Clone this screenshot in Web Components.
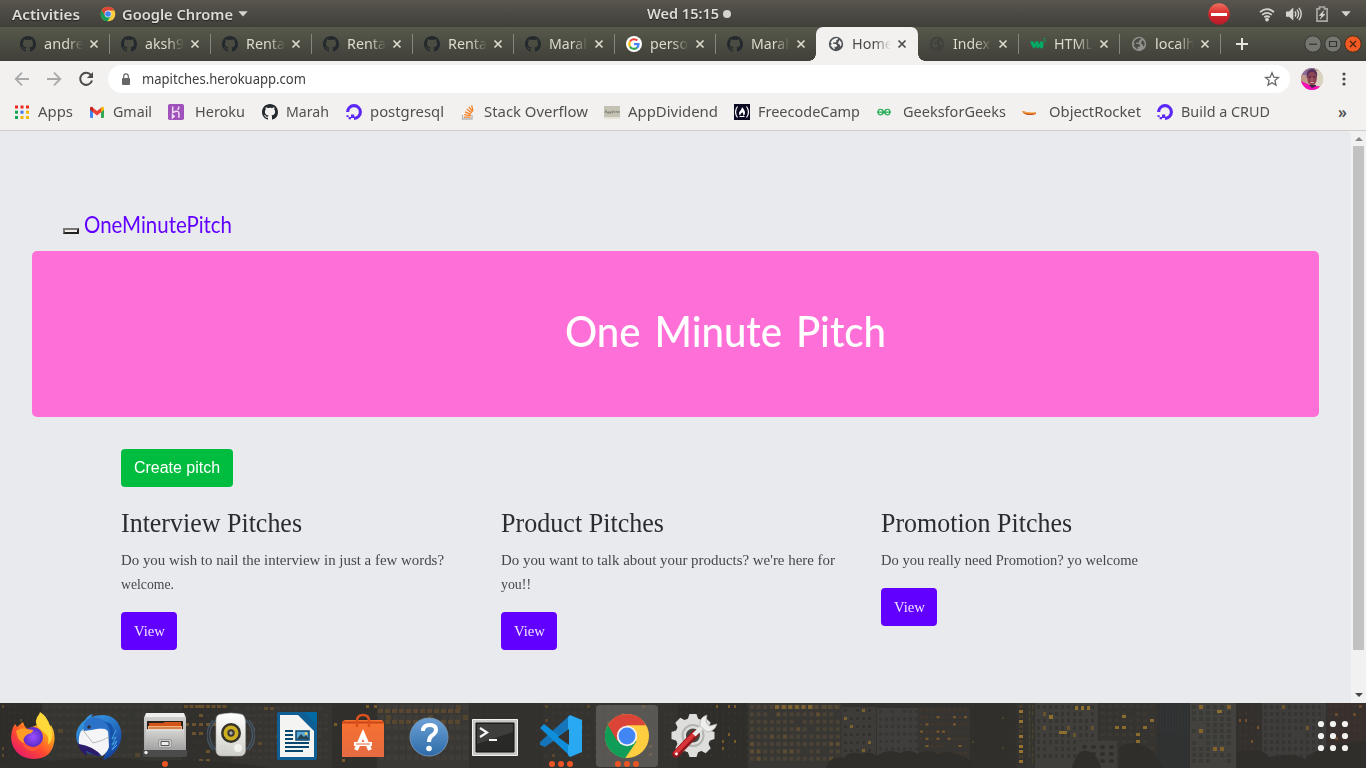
<!DOCTYPE html>
<html lang="en">
<head>
<meta charset="utf-8">
<title>Home</title>
<style>
html,body{margin:0;padding:0;width:1366px;height:768px;overflow:hidden;background:#33312e}
body{font-family:"Noto Sans","Open Sans",sans-serif}
</style>
</head>
<body>
<desktop-screen></desktop-screen>
<script>
const GH='<path d="M8 0C3.58 0 0 3.58 0 8c0 3.54 2.29 6.53 5.47 7.59.4.07.55-.17.55-.38 0-.19-.01-.82-.01-1.49-2.01.37-2.53-.49-2.69-.94-.09-.23-.48-.94-.82-1.13-.28-.15-.68-.52-.01-.53.63-.01 1.08.58 1.23.82.72 1.21 1.87.87 2.33.66.07-.52.28-.87.51-1.07-1.78-.2-3.64-.89-3.64-3.95 0-.87.31-1.59.82-2.15-.08-.2-.36-1.02.08-2.12 0 0 .67-.21 2.2.82.64-.18 1.32-.27 2-.27s1.36.09 2 .27c1.53-1.04 2.2-.82 2.2-.82.44 1.1.16 1.92.08 2.12.51.56.82 1.27.82 2.15 0 3.07-1.87 3.75-3.65 3.95.29.25.54.73.54 1.48 0 1.07-.01 1.93-.01 2.2 0 .21.15.46.55.38A8.01 8.01 0 0016 8c0-4.42-3.58-8-8-8z" fill="#24292e"/>';
const globe=(c,bg)=>`<circle cx="8" cy="8" r="7.2" fill="${c}"/><path d="M7.200 2.300 10 2 9.400 3.900 7.700 4.500 8.600 5.600 7.200 6.600 5.500 6.200 4.900 7.800 7.800 7.900 9.300 9.500 8.200 11 6.500 10.800 6.900 13.300 5.200 12.600 2.300 9 3.900 8.300 2.700 6.200Q4 3.200 7.200 2.300ZM11.500 4.100 13.400 6.500 13.600 9 12 10.700 12 8.700 10.100 7.600 10.400 5.900Z" fill="${bg}"/>`;
const CHROME='<circle cx="24" cy="24" r="22" fill="#ffcd40"/><path d="M24 24 4.900 13A22 22 0 0 0 22.300 46L33.500 29.500Z" fill="#0f9d58"/><path d="M4.900 13A22 22 0 0 1 43.200 13.300L24 13.300 14.500 29.400Z" fill="#db4437"/><circle cx="24" cy="24" r="10.200" fill="#f1f1f1"/><circle cx="24" cy="24" r="8.400" fill="#4285f4"/>';
const DO='<path d="M8 14.400A6.400 6.400 0 1 0 1.600 8" fill="none" stroke="#5b27f5" stroke-width="3.100"/><path d="M5 10.600h3.200v3.300H5ZM2.600 13h2.400v2.300H2.600ZM.5 11.200h2.100V13H.5Z" fill="#5b27f5"/>';
const ICONS={
github:[16,GH],
globe:[16,globe('#505154','#f2f1f0')],globeDark:[16,globe('#3f403b','#4b4b43')],globeGrey:[16,globe('#8f908c','#4b4b43')],
google:[16,'<circle cx="8" cy="8" r="8" fill="#fff"/><g fill="none" stroke-width="2.1"><path d="M11.3 4.5A4.7 4.7 0 0 0 4 5.6" stroke="#ea4335"/><path d="M4 5.5a4.7 4.7 0 0 0 0 5" stroke="#fbbc05"/><path d="M3.9 10.4a4.7 4.7 0 0 0 7.3 1.2" stroke="#34a853"/><path d="M8 8.1h4.6q0 2.3-1.6 3.6" stroke="#4285f4"/></g>'],
w3:[16,'<path d="M.4 5.200h3l1.300 3 .8-3h2.600l1.200 3 1.100-3h1.800c1.800 1 2 7.400-.5 7.400-1.200 0-1.800-.9-2-2-.5 1.200-1.300 2-2.300 2L6 9.800 5 12.600C2.500 12 1 8.500.4 5.200Z" fill="#05a967"/><path d="M13.300 2.600h1.900l-1 1.200q1.300.2 1 1.500t-1.900.8" fill="none" stroke="#05a967" stroke-width=".8"/>'],
chrome:[48,CHROME],
caret:[10,'<path d="M.3 2.300h9.400L5 7.400Z" fill="#d5d3ce"/>'],
noentry:[22,'<defs><linearGradient id="r" x2="0" y2="1"><stop stop-color="#f0705e"/><stop offset=".5" stop-color="#d5282b"/><stop offset="1" stop-color="#b51c2c"/></linearGradient></defs><circle cx="11" cy="11" r="10.700" fill="url(#r)"/><path d="M3 10h16v3H3Z" fill="#fff"/>'],
wifi:[16,'<g fill="none" stroke="#d5d3ce" stroke-width="1.800"><path d="M1 6.200q7-6.200 14 0M3.200 8.900q4.800-4 9.600 0M5.300 11.300q2.700-2.100 5.400 0"/></g><circle cx="8" cy="13.600" r="1.900" fill="#d5d3ce"/>'],
sound:[16,'<path d="M0 5.500h3L7.300 1.500v13L3 10.800H0Z" fill="#d5d3ce"/><g fill="none" stroke="#d5d3ce" stroke-width="1.400"><path d="M9 5.500q1.600 2.500 0 5M11 3.600q3.200 4.400 0 8.800M13 1.900q4.500 6 0 12.200"/></g>'],
battery:[16,'<path d="M3 2.800h2.500V1h5v1.800H13.100V15.200H3Z" fill="none" stroke="#aaa8a2" stroke-width="1.700"/><path d="M9.700 4.800 5.200 9.500H8L6.200 13 11 8.300H8.300Z" fill="#e0deda" stroke="#e0deda" stroke-width=".5"/>'],
close:[10,'<path d="m1.500 1.500 7 7m0-7-7 7" stroke="currentColor" stroke-width="1.700"/>'],
plus:[12,'<path d="M6 0v12M0 6h12" stroke="#e6e5de" stroke-width="2"/>'],
back:[16,'<path d="M15 8H2M8 1.700 1.700 8 8 14.300" fill="none" stroke="#a9a9a9" stroke-width="1.800"/>'],
fwd:[16,'<path d="M1 8h13M8 1.700 14.300 8 8 14.300" fill="none" stroke="#a9a9a9" stroke-width="1.800"/>'],
reload:[16,'<path d="M13 4.200A6 6 0 1 0 14 9.500" fill="none" stroke="#4b4b4b" stroke-width="2"/><path d="M15 1v6.100H8.900Z" fill="#4b4b4b"/>'],
lock:[12,'<rect x="2" y="5" width="8" height="7" rx="1" fill="#666"/><path d="M3.700 5V3.200a2.300 2.300 0 0 1 4.600 0V5" fill="none" stroke="#666" stroke-width="1.200"/>'],
star:[16,'<path d="m8 1.800 1.800 4.300 4.700.4-3.600 3 1.100 4.600L8 11.700l-4 2.400 1.100-4.600-3.600-3 4.700-.4Z" fill="none" stroke="#6a6a6a" stroke-width="1.300"/>'],
kebab:[16,'<g fill="#4a4a4a"><circle cx="8" cy="3" r="1.600"/><circle cx="8" cy="8" r="1.600"/><circle cx="8" cy="13" r="1.600"/></g>'],
avatar:[22,'<clipPath id="c"><circle cx="11" cy="11" r="11"/></clipPath><g clip-path="url(#c)"><path fill="#c4a78f" d="M0 0h22v22H0z"/><path fill="#d9d3bf" d="M14 3h8v15h-8z"/><path fill="#8d6d96" d="M0 0h14v4L7 6l-3 8H0Z"/><path fill="#bf9a86" d="M0 7h5v8H0Z"/><ellipse cx="11" cy="6.500" rx="5.200" ry="5.500" fill="#56305c"/><ellipse cx="11" cy="10.500" rx="4.800" ry="6.800" fill="#8d4555"/><path d="M7.500 9h2.500M12 9h2.500" stroke="#3a2038" stroke-width="1.200"/><path d="M11 10v3" stroke="#b97672"/><path d="M9.300 14.500h3.600" stroke="#dba7a6"/><path fill="#3f2540" d="M8 17h7v3H8Z"/><path fill="#f50fb8" d="M0 13q4 2 7 3l4 4 4-2 7 1v4H0Z"/></g>'],
apps:[16,'<path fill="#ea2a1f" d="M1 1.500h3v3H1zM6.500 1.500h3v3h-3z"/><path fill="#ea2a1f" d="M12 1.500h3v3h-3z"/><path fill="#14a352" d="M1 6.700h3v3H1z"/><path fill="#4374ec" d="M6.500 6.700h3v3h-3z"/><path fill="#f3b70b" d="M12 6.700h3v3h-3zM6.500 12h3v3h-3zM12 12h3v3h-3z"/><path fill="#14a352" d="M1 12h3v3H1z"/>'],
gmail:[16,'<path fill="#4285f4" d="M1 4.500h3V14H2q-1 0-1-1Z"/><path fill="#34a853" d="M12 4.500h3V13q0 1-1 1h-2Z"/><path fill="#ea4335" d="m3 3 5 4 5-4v4.500L8 11.500 3 7.500Z"/><path fill="#c5221f" d="M1 4q.6-2 2.700-1L4 8 1 5.800Z"/><path fill="#fbbc04" d="M15 4q-.6-2-2.700-1L12 8l3-2.200Z"/>'],
heroku:[16,'<rect width="16" height="16" rx="1.800" fill="#a052ba"/><path d="M4.700 2.500v6Q10.900 6 10.900 9v4.800M10.900 2.500q0 2-1.300 3.200M4.500 10.800v3l1.700-1.500Z" fill="none" stroke="#f0def6" stroke-width="1.500"/>'],
ocean:[16,DO],
so:[16,'<path d="M2.500 11V15h9.500v-4" fill="none" stroke="#b4b4b4" stroke-width="1.300"/><g stroke="#f48024" stroke-width="1.300"><path d="M4 13.200h6.500M4.200 10.600l6.500 1M5 7.800l6 2.500M6.700 5l5 4M9 2.800l3.500 5M11.700 1.300l1.200 5.800"/></g>'],
appd:[16,'<path fill="#c4c2b2" d="M0 2h16v12H0z"/><path fill="#e5e3d7" d="M0 13h16v2H0z"/><path d="M1 9l1-2.500L3 9M4 7.500v2.500m0-2.500q1.500.5 0 1.500M6 7.500v2.500m0-2.500q1.500.5 0 1.500M8 6.500V9q2-.5 1.500-2M11 7v2M12.500 7l.8 2 .8-2M15 7v2" fill="none" stroke="#77766c" stroke-width=".8"/>'],
fcc:[16,'<path fill="#0c0a23" d="M0 0h16v16H0z"/><path d="M3.500 2.500q-4 5.500 0 11M12.500 2.500q4 5.500 0 11" fill="none" stroke="#fff" stroke-width="1.200"/><path d="M8 3q3.200 3.500 3 6 0 2-2 2.700 1-2-.9-3.700-.1 1-1.500 2-.7 1 .2 1.700Q4.700 11 5 9q.2-1.300 1.500-2.500Q7.800 5.200 8 3ZM5.500 12h5v1h-5Z" fill="#fff"/>'],
gfg:[16,'<path d="M1 8.200h14M7 6Q3 4 2 7.500q.2 4.500 4 3 1.300-.7 1.300-2.300M9 6q4-2 5 1.500-.2 4.500-4 3-1.300-.7-1.300-2.300M5.700 5.500l4.600 5M10.300 5.500l-4.600 5" fill="none" stroke="#25ad58" stroke-width="1.200"/>'],
rocket:[16,'<path fill="#e66e22" d="M.8 6.800Q8 9.500 15.300 8.200l-.8 2Q8 12 2.500 9.600Z"/><path fill="#b33817" d="M3 9.600Q8 11 14.500 9.800 9 12.500 3 9.600Z"/><path d="M1.500 7.500q5 2 12 1.200" fill="none" stroke="#f7c56a" stroke-width=".7"/>'],
firefox:[48,'<defs><linearGradient id="f" x1=".9" y1="0" x2=".2" y2="1"><stop stop-color="#fff44f"/><stop offset=".35" stop-color="#ffa41c"/><stop offset=".65" stop-color="#ff4b2f"/><stop offset="1" stop-color="#e6156f"/></linearGradient><radialGradient id="p"><stop stop-color="#9b4dff"/><stop offset="1" stop-color="#5a2cc7"/></radialGradient></defs><path d="M6 12q1 1 2 3l6-5q1 4 4 7l10-4 3-13q8 5 10 15l1-2q5 9 3 18Q42 47 24 47 7 46 2.500 30 1 19 6 12Z" fill="url(#f)"/><path fill="#ffd83a" d="M31 1q-7 8-2 14l9 8q2 3 1 10 5-5 4-12-2-13-12-20Z"/><circle cx="24" cy="25" r="10" fill="url(#p)"/><path d="M7 19q5-4 11-2l6 1q0 3-5 4-7 4-3 10-7-3-8-9Z" fill="#ff9c26"/><path d="M14 30q8 9 18 3-3 6-9 6-8-1-9-9Z" fill="#ff5a34"/>'],
thunder:[48,'<defs><linearGradient id="t" x1=".2" x2=".8" y2="1"><stop stop-color="#39a0e8"/><stop offset="1" stop-color="#123b9a"/></linearGradient></defs><path d="M10 8Q13 3 18 2L16 5Q38-2 45 15q4 11-3 22-6 9-14 11l3-7-4 3Q1 42 1 23q1-9 9-15Z" fill="url(#t)"/><path fill="#2b1b6a" d="M3 31q0 7 9 13l-1-5 11 5 6-2-6-5Z"/><path fill="#f5f5f7" d="M6 19q-3 6-2 13 14 2 23 12 5-3 7-9l-1-18-21-1Z"/><path d="m7 17 11 14q9-2 16-6" fill="none" stroke="#aaa" stroke-width=".8"/><path fill="#2b72c8" d="M9 12Q11 6 19 5q10 1 17 11l-2 5q-3-5-8-5-8 2-17 3Z"/><path d="M26 8q11 4 9 21 1 9-6 15l3-1q9-7 8-22l-4-9Z" fill="#1753a9"/><circle cx="14" cy="15" r="1.700" fill="#302c30"/><path d="m41 18-4 9 4-2-4 8 5-4-5 9 5-5" fill="none" stroke="#45a4e5"/>'],
files:[48,'<defs><linearGradient id="s" x2="0" y2="1"><stop stop-color="#d5d5d4"/><stop offset="1" stop-color="#a0a0a0"/></linearGradient></defs><path d="M5 2.500h38l2 4v33H3v-33Z" fill="url(#s)"/><path fill="#efefee" d="M5 2h38l1 4H4Z"/><path fill="#28211e" d="M6 10h36v10H6Z"/><path fill="#d35418" d="M8 12h14l2-1h16v8H8Z"/><path fill="#f4b27b" d="M7 15h34v4H7Z"/><path d="M8 17h32" stroke="#b84e20"/><path d="M5 18.500h38l2 21H3Z" fill="url(#s)"/><path d="M5 19h38" stroke="#e8e8e8"/><rect x="17.500" y="28.500" width="13" height="8" rx="1.500" fill="#ccc" stroke="#999"/><path fill="#eee" stroke="#555" d="M20 30.500h8v4h-8Z"/><path fill="#4b4b4b" d="M2 39h44v5q0 2-2 2H4q-2 0-2-2Z"/><circle cx="5" cy="41.500" r="1.700" fill="#eee"/>'],
rhythm:[48,'<g fill="none" stroke="#4f6b86" opacity=".6" stroke-width="1.500"><path d="M9 9q-13 15 0 30M6 9q-12 15 0 30M39 9q13 15 0 30M42 9q12 15 0 30"/></g><defs><linearGradient id="q" x2="0" y2="1"><stop stop-color="#fff"/><stop offset="1" stop-color="#cecec9"/></linearGradient></defs><path d="M15 3q9-2 18 0 5 0 5.500 8V39q0 6-6 6H15q-6 0-6-6V9q0-6 6-6Z" fill="url(#q)" stroke="#aaa" stroke-width=".6"/><circle cx="24" cy="22" r="10" fill="#34322a"/><circle cx="24" cy="22" r="7.500" fill="#cdb022"/><circle cx="24" cy="22" r="3.700" fill="#3b3834"/><circle cx="24" cy="22" r="1.700" fill="#aaa"/><circle cx="31" cy="37" r="4" fill="#f1f1ee"/><rect x="14" y="35" width="4" height="5" fill="none" stroke="#d2d2d0"/>'],
writer:[48,'<path fill="#0f5f95" d="M6 0h26l12 12v34q0 2-2 2H6q-2 0-2-2V2q0-2 2-2Z"/><path fill="#0369a3" d="M31 0h13v13Z"/><path fill="#f4f4f2" d="M7 3h18l16 16v26H7Z"/><path d="M12 19h8M12 23h8M12 27h8M12 31h24M12 35h24M12 39h18" stroke="#07466e" stroke-width="2"/><path fill="#5ba7d6" stroke="#07466e" stroke-width="1.500" d="M23 19h13v9H23Z"/><path fill="#26424c" d="m24 27 4-5 3 3 2-2 3 4Z"/><circle cx="33" cy="21.500" r="1.300" fill="#ffd84a"/>'],
soft:[48,'<defs><linearGradient id="o" x2="0" y2="1"><stop stop-color="#f8712e"/><stop offset="1" stop-color="#e56b43"/></linearGradient></defs><path d="M4 9 6 8h37l2 3v34H3V11Z" fill="url(#o)"/><path d="M3 10.500h42" stroke="#c64618" stroke-width="2"/><path d="M18 15V9q0-6 6-6t6 6v6" fill="none" stroke="#d9501d" stroke-width="2.500"/><path d="m17 38 7-16 7 16M15 32h18" fill="none" stroke="#fff" stroke-width="4"/><path d="M17 32h14" stroke="#e66b35" stroke-width="1"/>'],
help:[48,'<defs><linearGradient id="b" x2="0" y2="1"><stop stop-color="#6da1d6"/><stop offset="1" stop-color="#2d6ba8"/></linearGradient></defs><circle cx="24" cy="25" r="19" fill="url(#b)" stroke="#7295b6"/><path d="M18 19q0-6 7-6 6 0 6 5 0 3-4 5.500-3 2-3 6.500" fill="none" stroke="#fff" stroke-width="4"/><circle cx="24" cy="36.500" r="2.800" fill="#fff"/>'],
term:[48,'<path fill="#c9c9c7" stroke="#f1f1f1" d="M1.500 7.500h45v36h-45Z"/><path fill="#292a28" stroke="#111" d="M5 11h38v29H5Z"/><path fill="#fff" opacity=".1" d="M6 12h36v8L6 32Z"/><path d="m9 16 7 4.500-7 4.500M18 28h8" fill="none" stroke="#f5f5f5" stroke-width="2.200"/>'],
code:[48,'<path fill="#1674b8" d="m3 30 29-26 3 12L8 35 3 33Z"/><path fill="#0e8edb" d="m3 16 4-4 29 23-3 9Z"/><path fill="#2aa9f3" d="M33 3 45 8V40L33 45Q31 44 31 42V5Z"/><path fill="#35322f" d="m32 17-11 8 11 8Z"/>'],
settings:[48,'<g fill="#dededc"><circle cx="22" cy="23.500" r="17.500"/><g id="g"><path d="M18.500 2h7l2 6h-11Zm-2 37h11l-2 6h-7Z"/></g><use href="#g" transform="rotate(45 22 23.500)"/><use href="#g" transform="rotate(90 22 23.500)"/><use href="#g" transform="rotate(135 22 23.500)"/></g><circle cx="22" cy="23.500" r="10.500" fill="none" stroke="#b4b4b1" stroke-width="2"/><circle cx="22" cy="23.500" r="7" fill="#464440"/><path d="m5 42 19-20" stroke="#8e171b" stroke-width="7.500" stroke-linecap="round"/><path d="m4.500 41 18.500-19" stroke="#db343b" stroke-width="4" stroke-linecap="round"/><path d="m23 23 10-10" stroke="#e9e9e7" stroke-width="4.500"/><path d="M29 14q-1-9 7-11l-1 7 3 4 8-2q-3 8-10 8Z" fill="#eeeeec" stroke="#aaa" stroke-width=".7"/><circle cx="5.500" cy="42" r="1.400" fill="#fff"/>'],
grid:[48,'<g fill="#f2f2f0">'+[12,24,36].map(x=>[12,24,36].map(y=>`<circle cx="${x}" cy="${y}" r="3.100"/>`).join('')).join('')+'</g>'],
min:[18,'<circle cx="9" cy="9" r="8.200" fill="#777771" stroke="#3a3a35"/><path d="M5 9.200h8" stroke="#32322f" stroke-width="1.200"/>'],
max:[18,'<circle cx="9" cy="9" r="8.200" fill="#777771" stroke="#3a3a35"/><path d="M5.500 6.500h7v5h-7Z" fill="none" stroke="#32322f" stroke-width="1.200"/>'],
shut:[18,'<circle cx="9" cy="9" r="8.200" fill="#f15a22" stroke="#46311f"/><path d="m6 6 6 6m0-6-6 6" stroke="#4a2212" stroke-width="1.300"/>']
};
class Base extends HTMLElement{
  render(html){if(!this.shadowRoot)this.attachShadow({mode:'open'});this.shadowRoot.innerHTML=html;}
}
customElements.define('ui-icon',class extends Base{
  connectedCallback(){const [v,body]=ICONS[this.getAttribute('name')];const s=this.getAttribute('size')||16;
    this.render(`<style>:host{display:block;flex:none;width:${s}px;height:${s}px}svg{display:block}</style><svg width="${s}" height="${s}" viewBox="0 0 ${v} ${v}">${body}</svg>`);}
});
/* A single line of text set to an exact measure. */
customElements.define('fit-text',class extends Base{
  connectedCallback(){const w=+this.getAttribute('w');
    this.render(`<style>:host{display:block;flex:none;width:${w}px;white-space:nowrap}span{display:inline-block;transform-origin:0 50%}</style><span><slot></slot></span>`);
    const s=this.shadowRoot.querySelector('span');const n=s.getBoundingClientRect().width;if(n)s.style.transform=`scaleX(${w/n})`;}
});
customElements.define('top-bar',class extends Base{
  connectedCallback(){this.render(`<style>
  :host{display:grid;grid-template-columns:647px 1fr 158px;height:27px;background:linear-gradient(#58554e,#403f3a);color:#dfdcd6;font-weight:600;font-size:14.2px;line-height:27px;text-shadow:0 1px 1px #222}
  div{display:flex;align-items:center}.l{padding-left:12px}.l ui-icon:first-of-type{margin:0 6px 0 20px}.l ui-icon:last-of-type{margin-left:5px}
  .clock{padding-bottom:1px}
  i{width:8px;height:8px;border-radius:50%;background:#d5d3ce;margin-left:4px}.r ui-icon+ui-icon{margin-left:12px}.r ui-icon:first-child{margin-top:-1px}</style>
  <div class="l"><fit-text w="68">Activities</fit-text><ui-icon name="chrome" size="16"></ui-icon><fit-text w="111">Google Chrome</fit-text><ui-icon name="caret" size="10"></ui-icon></div>
  <div class="clock"><fit-text w="72">Wed 15:15</fit-text><i></i></div>
  <div class="r"><ui-icon name="noentry" size="22"></ui-icon><ui-icon name="wifi" style="margin-left:29px"></ui-icon><ui-icon name="sound" style="margin-left:11px"></ui-icon><ui-icon name="battery"></ui-icon><ui-icon name="caret" size="10" style="margin-left:11px"></ui-icon></div>`);}
});
customElements.define('browser-tab',class extends Base{
  connectedCallback(){const on=this.hasAttribute('active'),sep=this.hasAttribute('sep');this.render(`<style>
  :host{display:flex;align-items:center;flex:none;box-sizing:border-box;width:101px;height:34px;padding-left:11px;color:${on?'#4c4c4c':'#dcdbd0'};font-size:14.2px;line-height:33px;position:relative;
  ${on?'width:102px;margin-left:-1px;padding-left:12px;background:#f2f1f0;border-radius:7px 7px 0 0;':''}}
  .t{width:39px;height:34px;margin-left:8px;overflow:hidden;-webkit-mask:linear-gradient(90deg,#000 58%,transparent);mask:linear-gradient(90deg,#000 58%,transparent)}
  .x{margin-left:6px}
  ${sep?':host::after{content:"";position:absolute;right:0;top:7px;width:1px;height:20px;background:#85867c}':''}
  ${on?':host::before,:host::after{content:"";position:absolute;bottom:0;width:7px;height:7px}:host::before{left:-7px;background:radial-gradient(circle at 0 0,transparent 6.500px,#f2f1f0 7px)}:host::after{right:-7px;background:radial-gradient(circle at 100% 0,transparent 6.500px,#f2f1f0 7px)}':''}
  </style><ui-icon name="${this.getAttribute('icon')}"></ui-icon><div class="t"><fit-text w="${this.getAttribute('w')}"><slot></slot></fit-text></div><ui-icon class="x" name="close" size="10"></ui-icon>`);}
});
customElements.define('tab-strip',class extends Base{
  connectedCallback(){const T=[['github','andre',40],['github','aksh9',39],['github','Renta',39],['github','Renta',39],['github','Renta',39],['github','Marah',43],['google','perso',38],['github','Marah',43],['globe','Home',41],['globeDark','Index',37],['w3','HTML',39],['globeGrey','localh',40]];
  this.render(`<style>:host{display:flex;align-items:center;height:34px;padding-left:9px;background:linear-gradient(#57594a,#403f3a)}
  .plus{margin-left:15px}.w{display:flex;margin-left:auto;padding-right:4px;gap:2px}</style>`+
  T.map((t,k)=>`<browser-tab icon="${t[0]}" w="${t[2]}" ${k==8?'active':''} ${k!=7&&k!=8?'sep':''}>${t[1]}</browser-tab>`).join('')+
  `<ui-icon class="plus" name="plus" size="12"></ui-icon><div class="w"><ui-icon name="min" size="18"></ui-icon><ui-icon name="max" size="18"></ui-icon><ui-icon name="shut" size="18"></ui-icon></div>`);}
});
customElements.define('address-bar',class extends Base{
  connectedCallback(){this.render(`<style>:host{display:flex;align-items:center;height:36px;background:#f2f1f0;color:#3e3e3e;font-size:14px;line-height:28px;padding-left:14px}
  .pill{display:flex;align-items:center;box-sizing:border-box;width:1182px;height:28px;border-radius:14px;background:#fff;margin-left:14px;padding:0 10px 0 12px}
  .pill fit-text{margin-left:10px}.pill ui-icon:last-child{margin-left:auto}</style>
  <ui-icon name="back"></ui-icon><ui-icon name="fwd" style="margin-left:16px"></ui-icon><ui-icon name="reload" style="margin-left:16px"></ui-icon>
  <div class="pill"><ui-icon name="lock" size="12"></ui-icon><fit-text w="164">mapitches.herokuapp.com</fit-text><ui-icon name="star" size="16"></ui-icon></div>
  <ui-icon name="avatar" size="22" style="margin-left:11px"></ui-icon><ui-icon name="kebab" style="margin-left:13px"></ui-icon>`);}
});
customElements.define('bookmark-bar',class extends Base{
  connectedCallback(){const B=[['apps',14,'Apps',38,35],['gmail',89,'Gmail',113,39],['heroku',168,'Heroku',195,50],['github',262,'Marah',286,43],['ocean',346,'postgresql',370,74],['so',460,'Stack Overflow',484,104],['appd',604,'AppDividend',628,90],['fcc',734,'FreecodeCamp',758,102],['gfg',876,'GeeksforGeeks',903,103],['rocket',1021,'ObjectRocket',1049,92],['ocean',1157,'Build a CRUD',1181,89]];
  let x=0,h='';for(const [i,ix,l,tx,w] of B){h+=`<div style="margin-left:${ix-x}px;gap:${tx-ix-16}px"><ui-icon name="${i}"></ui-icon><fit-text w="${w}">${l}</fit-text></div>`;x=tx+w;}
  this.render(`<style>:host{display:flex;align-items:center;box-sizing:border-box;height:34px;padding-bottom:4px;background:#f2f1f0;border-bottom:1px solid #cfcecd;color:#505050;font-size:14.200px;line-height:28px}div{display:flex;align-items:center}.m{margin-left:68px;font-size:15.500px;font-weight:600}</style>${h}<span class="m">»</span>`);}
});
customElements.define('pitch-card',class extends Base{
  connectedCallback(){const L=JSON.parse(this.getAttribute('lines'));this.render(`<style>:host{display:block;width:380px;font-family:"Liberation Serif",serif;color:#292d32}
  .h{font-size:27px;line-height:34px;margin-bottom:8px}.p{font-size:15px;line-height:24px;color:#44474c}
  button{display:flex;align-items:center;justify-content:center;width:56px;height:38px;margin:16px 0 0;padding:0;border:0;border-radius:4px;background:#6200ff;color:#efe6ff;font:15px/24px "Liberation Serif",serif}</style>
  <fit-text class="h" w="${this.getAttribute('w')}"><slot></slot></fit-text>${L.map(l=>`<fit-text class="p" w="${l[1]}">${l[0]}</fit-text>`).join('')}<button><fit-text w="31">View</fit-text></button>`);}
});
customElements.define('pitch-page',class extends Base{
  connectedCallback(){this.render(`<style>:host{display:grid;grid-template-columns:1351px 15px;height:572px;background:#f1f1f1}
  main{background:#e9eaee;border-top-right-radius:5px;padding:76px 0 0;box-sizing:border-box;height:572px;overflow:hidden}
  nav{display:flex;align-items:flex-start;height:44px;padding-left:63px;color:#6200ff;font:400 24px/34px Lato,sans-serif}
  .tg{box-sizing:border-box;width:16px;height:6px;border:2px solid;border-color:#777 #222 #222 #777;background:#f1efe9;margin:21px 5px 0 0}
  .hero{display:flex;align-items:center;box-sizing:border-box;width:1287px;height:166px;margin-left:32px;padding:0 0 6px 533px;background:#ff6fd8;border-radius:5px;color:#fff;font:500 43px/50px Lato,sans-serif;word-spacing:4px}
  .c{display:flex;align-items:center;justify-content:center;width:112px;height:38px;margin:32px 0 0 121px;padding:0;border:0;border-radius:4px;background:#00bd3f;color:#fff;font:16px/24px "Liberation Sans",sans-serif}
  .cards{display:flex;padding:19px 0 0 121px}
  .sb{display:flex;flex-direction:column;align-items:center}.sb b{width:11px;height:504px;background:#c1c1c1}
  .u,.d{width:0;height:0;border:4px solid transparent}.u{border-bottom-color:#888;border-top:0;margin:6px 0 5px}.d{border-top-color:#444;border-bottom:0;margin-top:43px}</style>
  <main><nav><div class="tg"></div><fit-text w="148">OneMinutePitch</fit-text></nav>
  <div class="hero"><fit-text w="321">One Minute Pitch</fit-text></div>
  <button class="c"><fit-text w="86">Create pitch</fit-text></button>
  <div class="cards">
  <pitch-card w="181" lines='[["Do you wish to nail the interview in just a few words?",323],["welcome.",53]]'>Interview Pitches</pitch-card>
  <pitch-card w="163" lines='[["Do you want to talk about your products? we&#39;re here for",334],["you!!",30]]'>Product Pitches</pitch-card>
  <pitch-card w="191" lines='[["Do you really need Promotion? yo welcome",257]]'>Promotion Pitches</pitch-card></div></main>
  <div class="sb"><div class="u"></div><b></b><div class="d"></div></div>`);}
});
/* Night skyline behind the dock: towers filled with a grid of windows. */
customElements.define('city-skyline',class extends Base{
  connectedCallback(){let s=7;const R=()=>(s=(s*16807)%2147483647)/2147483647;
  const B=[[0,0,42,65,'#2f2c2a','#34302c','#65512f',6,7,2,3,.1],[42,0,140,65,'#373632','#3f3c38','#5f4b30',7,8,5,4,.03],[183,0,48,65,'#31302d','#37342f','#7a5c2c',7,9,4,3,.2],[232,2,100,63,'#383734','#403d39','#6b522c',6,7,4,3,.04],[332,0,45,65,'#302f2c','#35312d','#8b642c',8,9,3,3,.12],[377,0,92,65,'#3b3a36','#44413c','#5c4a2f',7,10,5,5,.05],[470,0,72,65,'#33312e','#373430','#66492b',7,8,3,3,.06],[543,0,60,65,'#373431','#3d3935','#66492b',7,7,3,3,.05],[605,0,72,65,'#363431','#3b3834','#6a502b',7,8,3,3,.06],[678,0,70,65,'#302e2b','#35322e','#89662b',6,7,2,3,.09],
  [748,0,94,65,'#3b3935','#514739','#6a5432',6.600,7.400,4,4,.1],[842,4,34,61,'#403f3b','#34322f','#8d7030',6,8,3,3,.07],[877,5,41,60,'#434240','#383633','#67625b',6,7.500,3,3,.03],[918,4,52,61,'#383633','#493a2c','#94652a',5.500,7.200,3,2,.22],[970,0,45,65,'#302f2c','#33322e','#5a472a',5,6,2,2,.04],[1017,0,10,65,'#363430','#4d412c','#b18430',5,5,4,3,.5],[1027,0,7,65,'#393733','#57492f','#594a2e',3,6,1,4,.1],[1035,0,63,65,'#454341','#393632','#755b2e',6,7,3,4,.08],[1099,0,58,65,'#373532','#3f3a34','#a07b2e',7,7,4,3,.12],[1158,0,32,65,'#303133','#33363a','#34383b',3,30,1,29,.1],[1190,0,46,65,'#4a4743','#3b3c39','#98702a',7,6,4,4,.1],[1237,0,24,65,'#34302d','#3a3632','#875a28',6,7,2,3,.1],[1262,0,64,65,'#434140','#393633','#7d5e2e',6,7,3,4,.05],[1327,0,39,65,'#3a302d','#40342f','#7b5130',6,8,3,3,.1]];
  let h='';for(const [x,y,w,H,b,c,l,px,py,ww,wh,p] of B){h+=`<rect x="${x}" y="${y}" width="${w}" height="${H}" fill="${b}"/>`;
    for(let j=y+2;j+wh<y+H-4;j+=py)for(let i=x+2;i+ww<=x+w;i+=px){const r=R();if(r>.93)continue;h+=`<rect x="${i.toFixed(1)}" y="${j.toFixed(1)}" width="${ww}" height="${wh}" fill="${r<p?l:c}"/>`;}}
  for(let i=0;i<10;i++)h+=`<path d="M${775+i*6.600} 2h4v4h-4z" fill="${i<6?'#917031':'#5d5038'}"/>`;
  for(let i=0;i<12;i++)h+=`<path d="M${378+i*7} 6h5v4h-5zM${378+i*7} 17h5v4h-5z" fill="#654f30"/>`;
  for(let i=0;i<8;i++)h+=`<path d="M${184+i*5.500} 2h4v3h-4z" fill="#75572c"/>`;
  h+='<g fill="#a5812f"><path d="M1075 3h3v4h-3zM1081 3h3v4h-3zM1087 3h3v4h-3zM1049 12h4v4h-4zM1059 28h8v3h-8zM1122 12h4v3h-4zM1217 7h5v3h-5z"/></g><path fill="#464340" d="M1078 38h39v27h-39z"/>';for(let i=0;i<4;i++)for(let j=0;j<3;j++)h+=`<rect x="${1082+i*9}" y="${42+j*7}" width="5" height="4" rx="2" fill="#302f2d"/>`;
  h+='<path fill="#2f2d2a" d="M826 65q5-14 18-10 6-8 18-4 8-4 15 2 10-8 23-3 9-5 18 1 9-6 20 0 12-5 23 2 8 0 14 12ZM1072 65q5-20 16-17 10 4 13 17ZM1119 65v-20q16-11 34 4l10 16ZM1237 65v-16q25-6 32 5 25-5 36 2 12-14 61-18v27ZM0 65v-4q25-7 50-3 60-6 100 0 60-3 120 7Z"/>';
  this.render(`<style>:host{display:block;width:1366px;height:65px}svg{display:block}</style><svg width="1366" height="65"><rect width="1366" height="65" fill="#33312e"/>${h}<rect width="1366" height="65" fill="#33302c" opacity=".22"/></svg>`);}
});
customElements.define('app-dock',class extends Base{
  connectedCallback(){const A=['firefox','thunder','files','rhythm','writer','soft','help','term','code','chrome','settings'],D={2:1,8:3,9:3};
  this.render(`<style>:host{display:grid;height:65px}city-skyline,.row{grid-area:1/1}.row{position:relative;display:flex}
  .a{display:flex;flex-direction:column;align-items:center;box-sizing:border-box;width:62px;height:62px;margin:2px 2px 0;padding-top:7px;border-radius:4px}.on{background:rgba(125,123,118,.5)}
  .a:last-of-type ui-icon{margin-left:4px}.a:nth-child(3) ui-icon,.a:nth-child(4) ui-icon{margin-top:-1px;margin-bottom:1px}
  .d{display:flex;gap:3px;margin-top:1px;height:6px}.d i{width:6px;height:6px;border-radius:50%;background:#eb5424}.g{margin:9px 9px 0 auto}</style>
  <city-skyline></city-skyline><div class="row">${A.map((a,k)=>`<div class="a ${k==9?'on':''}"><ui-icon name="${a}" size="48"></ui-icon><div class="d">${'<i></i>'.repeat(D[k]||0)}</div></div>`).join('')}<ui-icon class="g" name="grid" size="48"></ui-icon></div>`);}
});
customElements.define('desktop-screen',class extends Base{
  connectedCallback(){this.render(`<style>:host{display:grid;grid-template-rows:27px 34px 36px 34px 572px 65px;width:1366px;height:768px;overflow:hidden}</style><top-bar></top-bar><tab-strip></tab-strip><address-bar></address-bar><bookmark-bar></bookmark-bar><pitch-page></pitch-page><app-dock></app-dock>`);}
});
</script>
</body>
</html>
